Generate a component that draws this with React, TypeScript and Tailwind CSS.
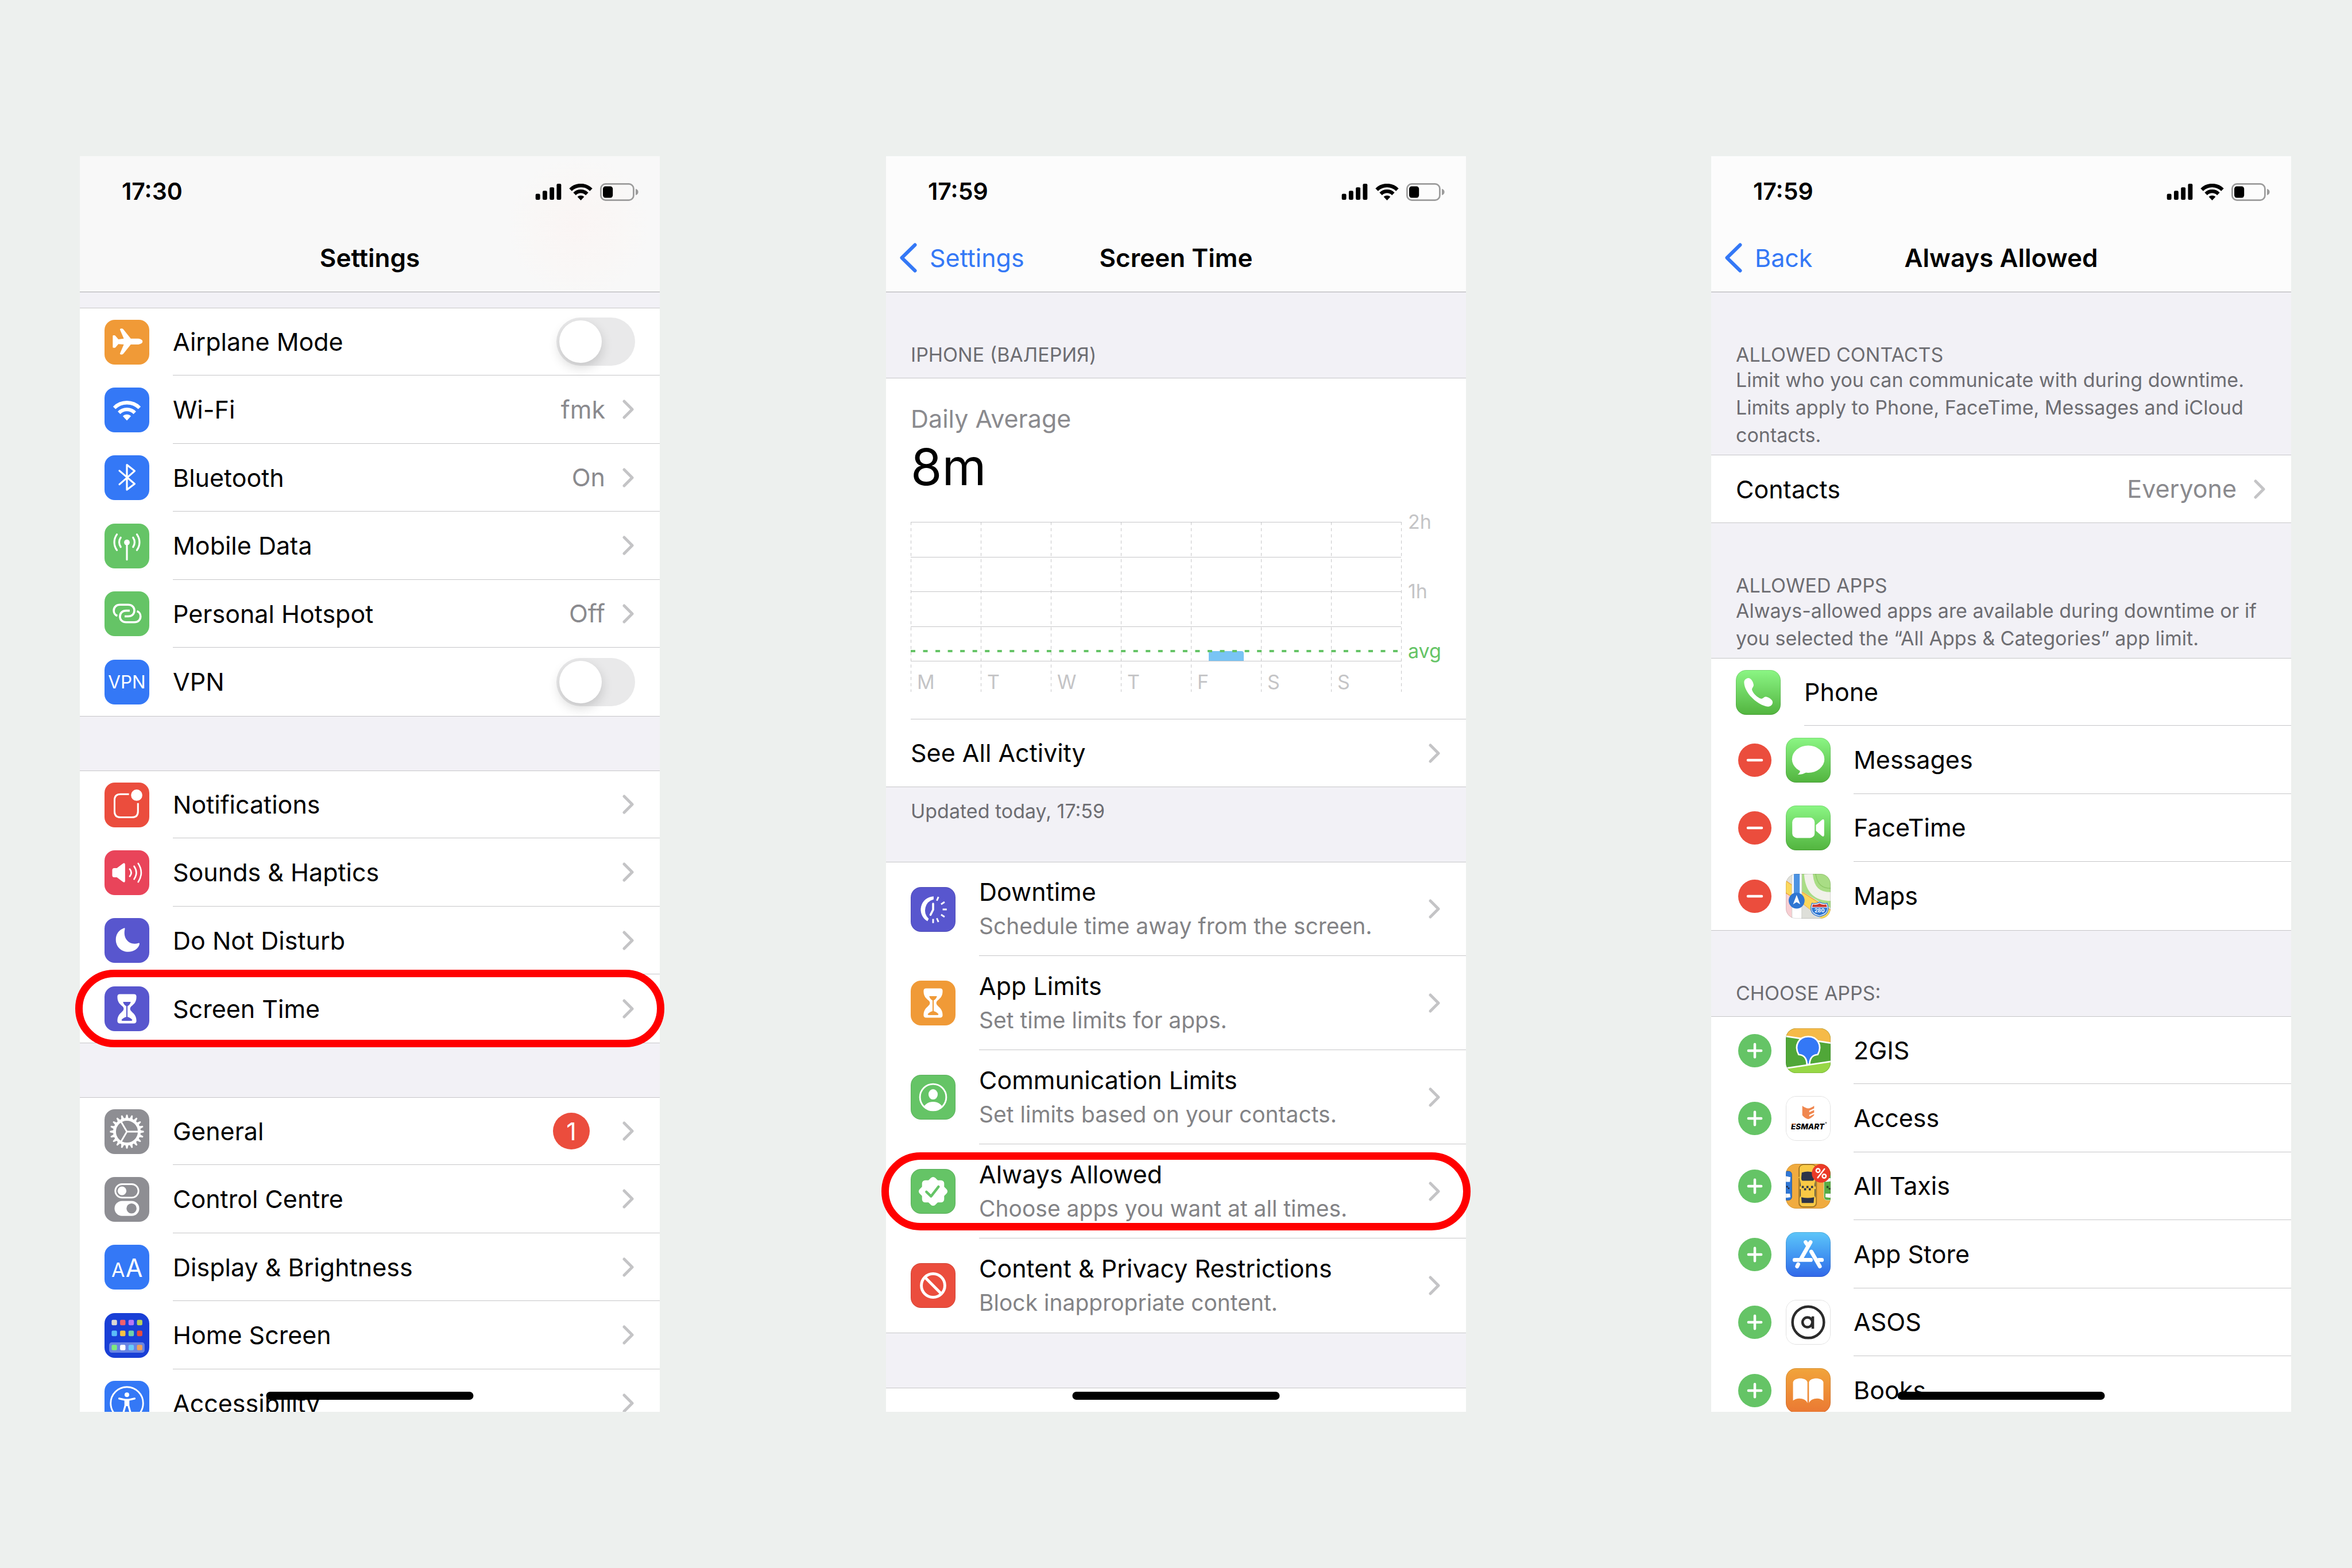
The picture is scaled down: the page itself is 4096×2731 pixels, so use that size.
import { useId, type ReactNode } from "react";

const FONT = "font-['Inter','Noto_Sans',sans-serif]";

/* ---------- status bar ---------- */

function SignalIcon() {
  return (
    <svg viewBox="0 0 51 32" className="h-[28px] w-[46px]" aria-hidden="true">
      <rect x="0" y="20" width="9" height="12" rx="2.5" />
      <rect x="14" y="14" width="9" height="18" rx="2.5" />
      <rect x="28" y="7" width="9" height="25" rx="2.5" />
      <rect x="42" y="0" width="9" height="32" rx="2.5" />
    </svg>
  );
}

function StatusWifiIcon() {
  return (
    <svg viewBox="0 0 45 32" className="h-[29px] w-[41px]" aria-hidden="true">
      <path
        d="M2.700 11.500A28 28 0 0 1 42.300 11.500M10.500 19.500A17 17 0 0 1 34.500 19.500"
        fill="none"
        stroke="#000"
        strokeWidth="7"
      />
      <path d="M22.500 32L16 25.200A9.500 9.500 0 0 1 29 25.200Z" />
    </svg>
  );
}

function BatteryIcon() {
  return (
    <svg viewBox="0 0 74 34" className="h-[31px] w-[67px]" aria-hidden="true">
      <rect x="1.500" y="1.500" width="63" height="31" rx="9" fill="none" stroke="#9b9b9b" strokeWidth="3" />
      <rect x="5.500" y="6" width="19" height="22" rx="5" />
      <path d="M68.500 11Q73.500 12.500 73.500 17T68.500 23Z" fill="#9b9b9b" />
    </svg>
  );
}

function StatusBar({ time }: { time: string }) {
  return (
    <div className="flex h-[118px] items-center justify-between pt-[6px] pr-[37px] pl-[73px]">
      <time className="text-[41px] font-semibold">{time}</time>
      <div className="flex items-center gap-[13px]">
        <SignalIcon />
        <StatusWifiIcon />
        <BatteryIcon />
      </div>
    </div>
  );
}

/* ---------- glyphs, all on an 87 unit tile ---------- */

function Tile({ bg, children, border }: { bg: string; children: ReactNode; border?: boolean }) {
  return (
    <svg
      viewBox="0 0 87 87"
      className={`h-[78px] w-[78px] shrink-0 rounded-[18px] ${bg} ${FONT}`}
      aria-hidden="true"
    >
      {children}
      {border ? (
        <rect x="0.500" y="0.500" width="86" height="86" rx="19.500" fill="none" stroke="#000" strokeOpacity="0.14" />
      ) : null}
    </svg>
  );
}

const ORANGE = "bg-[#f09a37]";
const BLUE = "bg-[#3478f6]";
const GREEN = "bg-[#65c466]";
const RED = "bg-[#eb4d3d]";
const INDIGO = "bg-[#5856ce]";
const GRAY = "bg-[#8e8e93]";

const line = {
  fill: "none",
  stroke: "#fff",
  strokeLinecap: "round",
  strokeLinejoin: "round",
} as const;

function AirplaneTile() {
  return (
    <Tile bg={ORANGE}>
      <path
        fill="#fff"
        d="M30 19Q30 17 32 17h2q2 0 3 2L51 36.500H66Q74 38 74 42T66 48H51L37 65.500q-1.500 2-3 2h-2q-2 0-2-2L37.500 48L27 47L21.500 53.500Q20.500 54.500 19 54.500H17.500Q16 54.500 16 53V31.500Q16 30 17.500 30H19Q20.500 30 21.500 31.500L27 38L37.500 36.500Z"
      />
    </Tile>
  );
}

function WifiTile() {
  return (
    <Tile bg={BLUE}>
      <path {...line} strokeLinecap="butt" strokeWidth="7" d="M19 39.500A34.500 34.500 0 0 1 68 39.500M28.200 49A21.500 21.500 0 0 1 58.800 49" />
      <path fill="#fff" d="M43.500 64L35.500 55.500A11.500 11.500 0 0 1 51.500 55.500Z" />
    </Tile>
  );
}

function BluetoothTile() {
  return (
    <Tile bg={BLUE}>
      <path {...line} strokeWidth="3.600" d="M29 30L58.500 55.500L43.500 67V18.500L58.500 30.500L29 56.500" />
    </Tile>
  );
}

function MobileDataTile() {
  return (
    <Tile bg={GREEN}>
      <circle cx="43.500" cy="36.500" r="5.500" fill="#fff" />
      <path
        {...line}
        strokeWidth="3.600"
        d="M43.500 38V70M24 21A26 26 0 0 0 24 51.500M63 21A26 26 0 0 1 63 51.500M31.500 27A16 16 0 0 0 31.500 45.500M55.500 27A16 16 0 0 1 55.500 45.500"
      />
    </Tile>
  );
}

function HotspotTile() {
  return (
    <Tile bg={GREEN}>
      <path
        {...line}
        strokeLinecap="butt"
        strokeWidth="4"
        d="M25 47.500C20 46 18 41 18 37.500C18 30.500 23 26 30 26H46C53 26 58 30.500 58 37C58 44 53 48.500 46 48.500H39"
      />
      <path
        {...line}
        strokeLinecap="butt"
        strokeWidth="4"
        d="M63 38.500C68 40 70 45 70 48.500C70 55.500 65 60 58 60H42C35 60 30 55.500 30 49C30 42 35 37.500 42 37.500H49"
      />
    </Tile>
  );
}

function VpnTile() {
  return (
    <Tile bg={BLUE}>
      <text x="43.500" y="56" textAnchor="middle" fontSize="35" fill="#fff">
        VPN
      </text>
    </Tile>
  );
}

function NotificationsTile() {
  return (
    <Tile bg={RED}>
      <path {...line} strokeLinecap="butt" strokeWidth="3.400" d="M47.500 22.500H31Q19.500 22.500 19.500 34V56Q19.500 67.500 31 67.500H53.500Q65 67.500 65 56V40" />
      <circle cx="62.500" cy="24.500" r="11" fill="#fff" />
    </Tile>
  );
}

function SoundsTile() {
  return (
    <Tile bg="bg-[#e9445a]">
      <path fill="#fff" d="M19 34.500H24L35.500 26Q40 23 40 28V59Q40 64 35.500 61L24 52.500H19Q15 52.500 15 48.500V38.500Q15 34.500 19 34.500Z" />
      <path {...line} strokeWidth="3" d="M49 36.500Q55 43.500 49 50.500M57.500 31Q66 43.500 57.500 56M65.500 25.500Q77 43.500 65.500 61.500" />
    </Tile>
  );
}

function MoonTile() {
  return (
    <Tile bg={INDIGO}>
      <path
        fill="#fff"
        d="M38 19.500C27 23 22 32 22 42C22 56 33 65.500 46 65.500C57 65.500 66 59.500 68 50.500C68.300 48.500 67 48.300 65.500 48.800C50 53.500 35 42 39.500 21.500C39.800 20 39.500 19 38 19.500Z"
      />
    </Tile>
  );
}

function HourglassTile({ bg, ink }: { bg: string; ink: string }) {
  return (
    <Tile bg={bg}>
      <path
        fill="#fff"
        d="M25 20Q25 15 30 15H57Q62 15 62 20C62 33 55 35 51 40Q48.500 43.500 51 47C55 52 62 55 62 67Q62 72 57 72H30Q25 72 25 67C25 55 32 52 36 47Q38.500 43.500 36 40C32 35 25 33 25 20Z"
      />
      <path fill={ink} d="M36 30H51Q50 35 44.600 38.500V59Q51 61 54 65Q54 67 52 67H35Q33 67 33 65Q36 61 42.400 59V38.500Q37 35 36 30Z" />
    </Tile>
  );
}

function GearTile() {
  const teeth = Array.from({ length: 20 }, (_, i) => i * 18);
  return (
    <Tile bg={GRAY}>
      <circle cx="43.500" cy="43.500" r="24" fill="none" stroke="#fff" strokeWidth="5.500" />
      {teeth.map((a) => (
        <path key={a} fill="#fff" d="M40.500 18L42.200 10.500H44.800L46.500 18Z" transform={`rotate(${a} 43.500 43.500)`} />
      ))}
      <path {...line} strokeWidth="3.200" d="M43.500 43.500H66M43.500 43.500L32 24M43.500 43.500L32 63" />
    </Tile>
  );
}

function ControlCentreTile() {
  return (
    <Tile bg={GRAY}>
      <rect x="21" y="14" width="45" height="26" rx="13" fill="none" stroke="#fff" strokeWidth="3.200" />
      <circle cx="34" cy="27" r="8.500" fill="#fff" />
      <rect x="19.500" y="46.500" width="48" height="29" rx="14.500" fill="#fff" />
      <circle cx="52.500" cy="61" r="9.800" fill="#8e8e93" />
    </Tile>
  );
}

function DisplayTile() {
  return (
    <Tile bg={BLUE}>
      <text x="13.500" y="62" fontSize="38" fill="#fff">
        A
      </text>
      <text x="41" y="62" fontSize="48" fill="#fff">
        A
      </text>
    </Tile>
  );
}

const homeCells = [
  { y: 13, colors: ["#d9d9d3", "#f2606c", "#b678f5", "#b9d25a"] },
  { y: 34, colors: ["#5bbcf8", "#f6c244", "#6fd0a8", "#ea4d3c"] },
  { y: 61.5, colors: ["#7eea7d", "#ffffff", "#6acbfa", "#f0a05a"] },
];

function HomeScreenTile() {
  return (
    <Tile bg="bg-[#193fd6]">
      <rect x="9" y="57" width="69" height="20" rx="5" fill="#6884e3" />
      {homeCells.map((row) =>
        row.colors.map((c, i) => (
          <rect key={c} x={13.8 + i * 16.4} y={row.y} width="10.500" height="10.800" rx="2.500" fill={c} />
        )),
      )}
    </Tile>
  );
}

function AccessibilityTile() {
  return (
    <Tile bg={BLUE}>
      <circle cx="43.500" cy="43.500" r="31.500" fill="none" stroke="#fff" strokeWidth="3.200" />
      <circle cx="43.500" cy="27" r="4.500" fill="#fff" />
      <path {...line} strokeWidth="3.600" d="M28.500 34.500L40 37H47L58.500 34.500M40.500 38V48L36 64M46.500 38V48L51 64" />
      <path fill="#fff" d="M39 36H48V49H39Z" />
    </Tile>
  );
}

function DowntimeTile() {
  return (
    <Tile bg={INDIGO} border>
      <path fill="#fff" d="M44.500 18A26 26 0 0 0 32.500 66.500L35 61.500A22 22 0 0 1 44.500 24Z" />
      <path {...line} strokeWidth="4" d="M43.500 32.500V44L38.500 54" />
      {[-67, -33, 0, 33, 67, 90].map((a) => (
        <path key={a} d="M62 43.500H70" stroke="#fff" strokeWidth="3.200" transform={`rotate(${a} 43.500 43.500)`} />
      ))}
    </Tile>
  );
}

function ContactTile() {
  const clip = useId();
  return (
    <Tile bg={GREEN} border>
      <clipPath id={clip}>
        <circle cx="43.500" cy="43.500" r="26" />
      </clipPath>
      <circle cx="43.500" cy="43.500" r="25.500" fill="none" stroke="#fff" strokeWidth="3.200" />
      <ellipse cx="43.500" cy="38" rx="9" ry="10" fill="#fff" />
      <ellipse cx="43.500" cy="69" rx="20" ry="16.500" fill="#fff" clipPath={`url(#${clip})`} />
    </Tile>
  );
}

function SealTile() {
  return (
    <Tile bg={GREEN} border>
      <rect x="22" y="22" width="43" height="43" rx="6" fill="#fff" />
      <rect x="22" y="22" width="43" height="43" rx="6" fill="#fff" transform="rotate(45 43.500 43.500)" />
      <path {...line} stroke="#65c466" strokeWidth="5" d="M30.500 44.500L39.500 53L54 34.500" />
    </Tile>
  );
}

function BlockTile() {
  return (
    <Tile bg={RED} border>
      <circle cx="43.500" cy="43.500" r="22.800" fill="none" stroke="#fff" strokeWidth="5.500" />
      <path {...line} strokeWidth="5.500" d="M28 28L59 59" />
    </Tile>
  );
}

const APP_GREEN = "bg-linear-to-b from-[#8bf684] to-[#52b43e]";

function PhoneTile() {
  return (
    <Tile bg={APP_GREEN} border>
      <path
        fill="#fff"
        d="M24 15.500C29 15 34 23 34.500 29C34.500 33.500 30.500 35 31.500 39C34 46 42 53.500 48.500 55.500C53 56.500 54.500 51.500 58.500 52C64 53 71.500 58 71.500 62.500C71.500 67 68 71 62.500 71C47 70.500 17 48 16 24C16 19 20 16 24 15.500Z"
      />
    </Tile>
  );
}

function MessagesTile() {
  return (
    <Tile bg={APP_GREEN} border>
      <ellipse cx="43.500" cy="41.500" rx="31.500" ry="26.500" fill="#fff" />
      <path fill="#fff" d="M27 59Q30 67 23 71.500Q34 71.500 41 66Z" />
    </Tile>
  );
}

function FaceTimeTile() {
  return (
    <Tile bg={APP_GREEN} border>
      <rect x="12.500" y="23.500" width="43.500" height="39.500" rx="9" fill="#fff" />
      <path fill="#fff" d="M58.500 38L70 28Q74.500 25 74.500 30V57Q74.500 62 70 59L58.500 49Z" />
    </Tile>
  );
}

function MapsTile() {
  return (
    <Tile bg="bg-[#e0e0da]" border>
      <path fill="#a9dd85" d="M31 0H87V66L31 34Z" />
      <path d="M44 0C46 32 62 44 87 44" fill="none" stroke="#f1f1ea" strokeWidth="17" />
      <path d="M58 0C61 22 72 28 87 28" fill="none" stroke="#8cc766" strokeWidth="1.500" />
      <path fill="#f8cfd3" d="M0 37L12 46V87H0Z" />
      <path fill="#fbd75b" stroke="#f0a93f" strokeWidth="1.500" d="M-2 12L31 35L90 72V90H70L31 56L-2 36Z" />
      <path fill="#dedfd9" d="M31 57L70 88H31Z" />
      <path fill="#fff" d="M12 -1H31V88H12Z" stroke="#cfcfc9" strokeWidth="1" />
      <path fill="#4d93e2" d="M15.500 0H27V45H15.500Z" />
      <circle cx="21" cy="52" r="15.500" fill="#2f76d2" />
      <path fill="#fff" d="M21 41L28 59L21 55L14 59Z" />
      <path fill="#fff" stroke="#2f76d2" strokeWidth="1.500" d="M51 57Q58 59 65.500 55Q73 59 80 57Q86 72 76 79Q70 82 65.500 83Q61 82 55 79Q45 72 51 57Z" />
      <path fill="#c8362e" d="M52.500 59.500Q60 61 65.500 57.500Q71 61 78.500 59.500L80 64.500H51Z" />
      <path fill="#2f76d2" d="M50.500 65.500H80.500Q81 73 75 77Q69 80 65.500 81Q62 80 56 77Q50 73 50.500 65.500Z" />
      <text x="65.500" y="75" textAnchor="middle" fontSize="10" fontWeight="700" fill="#fff">
        280
      </text>
    </Tile>
  );
}

function GisTile() {
  return (
    <Tile bg="bg-[#50a738]" border>
      <path fill="#f5ba48" stroke="#fff" strokeWidth="3" d="M-3 -3H90V29L-3 15Z" />
      <path fill="#97d746" stroke="#fff" strokeWidth="3" d="M-3 78L90 64V90H-3Z" />
      <path
        fill="#3478f6"
        stroke="#fff"
        strokeWidth="3"
        strokeLinejoin="round"
        d="M25 51C15 33 26 16 43.500 16S72 33 62 51C52 51.500 46.500 58 46 70H41C40.500 58 35 51.500 25 51Z"
      />
    </Tile>
  );
}

function EsmartTile() {
  return (
    <Tile bg="bg-white" border>
      <path fill="#f0874f" d="M32 19Q39 24 43.500 24T55 19V24L45.500 28.500V31.500L55 27V32L45.500 36.500V39.500L55 35V37Q51 42 43.500 45Q35 42 32 37Z" />
      <text x="42.500" y="65" textAnchor="middle" fontSize="15" fontWeight="800" fontStyle="italic" fill="#000">
        ESMART
      </text>
      <path d="M13 54.200H19" stroke="#f0874f" strokeWidth="2" />
      <circle cx="78" cy="52" r="1.800" fill="#888" />
    </Tile>
  );
}

function TaxisTile() {
  return (
    <Tile bg="bg-[#f0ab3f]" border>
      <rect x="-12" y="14.500" width="23.500" height="56" rx="6" fill="#2f77d6" stroke="#26589c" />
      <path fill="#fff" d="M0 24L9 26L8 35H0ZM0 58H8L9 65L0 66Z" />
      <path fill="#222b45" d="M1 43H4V46H1ZM4 46H7V49H4Z" />
      <rect x="74" y="14.500" width="24" height="56" rx="6" fill="#57ad45" stroke="#d9e9c8" />
      <path fill="#fff" d="M77 35L87 34V28H77ZM77 58H87V66L77 65Z" />
      <path fill="#2d4a2a" d="M79 43H83V47H79ZM83 47H87V50H83Z" />
      <rect x="24.500" y="2" width="36" height="83" rx="8" fill="#c4852b" />
      <rect x="26" y="1.500" width="33" height="82" rx="8" fill="#f9c945" stroke="#8a6a22" strokeWidth="1.200" />
      <path d="M22 28L27 26M62 28L58 26" stroke="#e9b43a" strokeWidth="2" />
      <path fill="#2d3449" d="M31 17Q42.500 13 54 17L55 27Q55 33 52 33H33Q30 33 30 27ZM30 65Q42.500 68 55 65L54 76H31ZM27.500 30L29 40V44H27.500ZM57.500 30L56 40V44H57.500ZM27.500 49H29V62L27.500 66ZM57.500 49H56V62L57.500 66Z" />
      <path fill="#2d3449" d="M31 43H35V47H31ZM40 43H44V47H40ZM49 43H53V47H49ZM35.500 47.500H39.500V51.500H35.500ZM44.500 47.500H48.500V51.500H44.500Z" />
      <circle cx="68.500" cy="18.500" r="18" fill="#eb3a28" />
      <g fill="none" stroke="#fff" strokeWidth="2.800" strokeLinecap="round">
        <circle cx="62.500" cy="13" r="3.600" />
        <circle cx="74.500" cy="24" r="3.600" />
        <path d="M75 10L62 27" />
      </g>
    </Tile>
  );
}

function AppStoreTile() {
  return (
    <Tile bg="bg-linear-to-b from-[#5ec6f9] to-[#3267e8]" border>
      <path {...line} strokeWidth="7.600" d="M38.500 19.500L41 23.500M49.500 38L66 66.500M64 54H70M17 54H48.500M24 62.500L22 66.500" />
      <path {...line} strokeWidth="7.600" d="M48 19.500L30 51" />
    </Tile>
  );
}

function AsosTile() {
  return (
    <Tile bg="bg-white" border>
      <g fill="none" stroke="#2b2b2b">
        <circle cx="43.500" cy="43.500" r="30.500" strokeWidth="5" />
        <circle cx="42" cy="43.500" r="9.500" strokeWidth="5" />
        <path d="M52.500 32V56" strokeWidth="5" />
      </g>
    </Tile>
  );
}

function BooksTile() {
  return (
    <Tile bg="bg-linear-to-b from-[#f1a43b] to-[#ea7833]" border>
      <path fill="#fff" d="M14 27C17 17.500 39 17.500 42 27V68C39 57.500 21 56 14 63Z" />
      <path fill="#fff" d="M73 27C70 17.500 48 17.500 45 27V68C48 57.500 66 56 73 63Z" />
    </Tile>
  );
}

/* ---------- list parts ---------- */

function Chevron() {
  return (
    <svg viewBox="0 0 22 34" className="h-[34px] w-[22px] shrink-0" aria-hidden="true">
      <path d="M3 3L17 17L3 31" fill="none" stroke="#c4c4c6" strokeWidth="5" strokeLinecap="round" strokeLinejoin="round" />
    </svg>
  );
}

function Highlight({ tall }: { tall?: boolean }) {
  return (
    <span
      className={`pointer-events-none absolute -inset-x-[8px] z-10 rounded-full border-[13px] border-[#ff0000] ${
        tall ? "inset-y-[14px]" : "-inset-y-[8px]"
      }`}
    />
  );
}

function List({ children }: { children: ReactNode }) {
  return <ul className="border-b border-[#c6c6c8] bg-white">{children}</ul>;
}

type RowProps = {
  label: string;
  icon?: ReactNode;
  value?: string;
  badge?: number;
  subtitle?: string;
  highlight?: boolean;
};

const rowBox = "group relative flex border-[#c6c6c8] first:border-t";
const rowHeight = "h-[118px] even:h-[119px]";
const rowBody =
  "flex h-full flex-1 items-center border-b border-[#c6c6c8] pr-[43px] group-last:border-b-0";

function LinkRow({ label, icon, value, badge, subtitle, highlight }: RowProps) {
  return (
    <li className={`${rowBox} ${subtitle ? "h-[164px]" : rowHeight}`}>
      <a href="#" className="flex flex-1 items-center gap-[41px] pl-[43px]">
        {icon}
        <span className={rowBody}>
          <span className="flex flex-1 flex-col leading-[60px]">
            <span>{label}</span>
            {subtitle ? <span className="text-[39px] text-[#838386]">{subtitle}</span> : null}
          </span>
          {value ? <span className="mr-[30px] text-[#8a8a8e]">{value}</span> : null}
          {badge ? (
            <span className="mr-[57px] flex size-[64px] items-center justify-center rounded-full bg-[#eb4d3d] text-white">
              {badge}
            </span>
          ) : null}
          <Chevron />
        </span>
      </a>
      {highlight ? <Highlight tall={!!subtitle} /> : null}
    </li>
  );
}

function ToggleRow({ label, icon }: RowProps) {
  const id = useId();
  return (
    <li className={`${rowBox} ${rowHeight} items-center gap-[41px] pl-[43px]`}>
      {icon}
      <div className={rowBody}>
        <label htmlFor={id} className="flex-1">
          {label}
        </label>
        <input
          id={id}
          type="checkbox"
          className="h-[84px] w-[137px] appearance-none rounded-full bg-[#e9e9ea] p-[5px] before:block before:size-[74px] before:rounded-full before:bg-white before:shadow-[0_8px_20px_rgba(0,0,0,0.16)] checked:bg-[#65c466] checked:before:ml-[53px]"
        />
      </div>
    </li>
  );
}

function AppRow({ label, icon, action }: RowProps & { action: "add" | "remove" }) {
  return (
    <li className={`${rowBox} ${rowHeight} items-center pl-[47px]`}>
      <button
        type="button"
        aria-label={`${action} ${label}`}
        className={`mr-[25px] size-[58px] shrink-0 rounded-full ${action === "add" ? GREEN : RED}`}
      >
        <svg viewBox="0 0 65 65" aria-hidden="true">
          <path {...line} strokeWidth="5" d={action === "add" ? "M20 32.500H45M32.500 20V45" : "M19 32.500H46"} />
        </svg>
      </button>
      {icon}
      <div className={`ml-[40px] ${rowBody}`}>{label}</div>
    </li>
  );
}

function SectionHeader({ title, note }: { title: string; note?: string }) {
  return (
    <div className={`pt-[89px] pr-[24px] pl-[43px] text-[34px] text-[#6d6d72] ${note ? "pb-[10px]" : "pb-[20px]"}`}>
      <h2 className="leading-[40px]">{title}</h2>
      {note ? <p className="leading-[48px]">{note}</p> : null}
    </div>
  );
}

function Screen({
  time,
  title,
  back,
  tinted,
  children,
}: {
  time: string;
  title: string;
  back?: string;
  tinted?: boolean;
  children: ReactNode;
}) {
  return (
    <section className="relative aspect-[1125/2436] min-h-0 min-w-0 flex-1 overflow-y-clip bg-[#f2f1f6]">
      <header
        className={`border-b border-[#a9a9ac] ${
          tinted
            ? "bg-[#f8f8f8] bg-[radial-gradient(circle_at_86%_52%,#faf5f4_0,#f9f7f6_9%,#f8f8f8_14%)]"
            : "bg-[#fcfcfc]"
        }`}
      >
        <StatusBar time={time} />
        <nav className="grid h-[118px] grid-cols-[1fr_auto_1fr] items-center">
          <div>
            {back ? (
              <a href="#" className="flex items-center gap-[22px] pl-[23px] text-[#3478f6]">
                <svg viewBox="0 0 31 52" className="h-[52px] w-[31px]" aria-hidden="true">
                  <path d="M27.500 3.500L4.500 26L27.500 48.500" fill="none" stroke="#3478f6" strokeWidth="6" strokeLinecap="round" strokeLinejoin="round" />
                </svg>
                {back}
              </a>
            ) : null}
          </div>
          <h1 className="text-[44px] font-semibold">{title}</h1>
        </nav>
      </header>
      {children}
      <div className="absolute bottom-[21px] left-1/2 z-10 h-[14px] w-[361px] -translate-x-1/2 rounded-full bg-black" />
    </section>
  );
}

/* ---------- weekly chart ---------- */

const days = ["M", "T", "W", "T", "F", "S", "S"];

function UsageChart() {
  return (
    <svg viewBox="0 0 967 340" className={`block w-full text-[34px] ${FONT}`} role="img" aria-label="Daily average screen time">
      <g stroke="#c6c6c8" strokeWidth="1">
        {[0, 1, 2, 3, 4].map((i) => (
          <path key={i} d={`M0 ${Math.round(20 + i * 60.6) + 0.5}H854`} />
        ))}
        {[0, 1, 2, 3, 4, 5, 6, 7].map((i) => (
          <path key={i} d={`M${i * 122 + 0.5} 20V316`} strokeDasharray="5.400 5.400" />
        ))}
      </g>
      <path d="M519 262V249Q519 245 523 245H576Q580 245 580 249V262Z" fill="#79c4f4" />
      <path d="M0 245H854" stroke="#65c466" strokeWidth="4" strokeDasharray="8 13.540" />
      <g fill="#c4c4c6">
        {days.map((d, i) => (
          <text key={i} x={i * 122 + 11} y="311">
            {d}
          </text>
        ))}
        <text x="866" y="32">
          2h
        </text>
        <text x="866" y="153">
          1h
        </text>
      </g>
      <text x="866" y="257" fill="#65c466">
        avg
      </text>
    </svg>
  );
}

/* ---------- screens ---------- */

function SettingsScreen() {
  return (
    <Screen time="17:30" title="Settings" tinted>
      <div className="flex flex-col gap-[94px] pt-[27px]">
        <List>
          <ToggleRow icon={<AirplaneTile />} label="Airplane Mode" />
          <LinkRow icon={<WifiTile />} label="Wi-Fi" value="fmk" />
          <LinkRow icon={<BluetoothTile />} label="Bluetooth" value="On" />
          <LinkRow icon={<MobileDataTile />} label="Mobile Data" />
          <LinkRow icon={<HotspotTile />} label="Personal Hotspot" value="Off" />
          <ToggleRow icon={<VpnTile />} label="VPN" />
        </List>
        <List>
          <LinkRow icon={<NotificationsTile />} label="Notifications" />
          <LinkRow icon={<SoundsTile />} label="Sounds & Haptics" />
          <LinkRow icon={<MoonTile />} label="Do Not Disturb" />
          <LinkRow icon={<HourglassTile bg={INDIGO} ink="#5856ce" />} label="Screen Time" highlight />
        </List>
        <List>
          <LinkRow icon={<GearTile />} label="General" badge={1} />
          <LinkRow icon={<ControlCentreTile />} label="Control Centre" />
          <LinkRow icon={<DisplayTile />} label="Display & Brightness" />
          <LinkRow icon={<HomeScreenTile />} label="Home Screen" />
          <LinkRow icon={<AccessibilityTile />} label="Accessibility" />
        </List>
      </div>
    </Screen>
  );
}

function ScreenTimeScreen() {
  return (
    <Screen time="17:59" title="Screen Time" back="Settings">
      <SectionHeader title="IPHONE (ВАЛЕРИЯ)" />
      <div className="border-y border-[#c6c6c8] bg-white pl-[43px]">
        <p className="pt-[40px] leading-[60px] text-[#8a8a8e]">Daily Average</p>
        <p className="text-[88px] leading-[108px]">8m</p>
        <div className="pt-[22px] pb-[23px]">
          <UsageChart />
        </div>
        <a href="#" className="flex h-[118px] items-center justify-between border-t border-[#c6c6c8] pr-[43px]">
          See All Activity
          <Chevron />
        </a>
      </div>
      <p className="pt-[18px] pb-[64px] pl-[43px] text-[34px] leading-[48px] text-[#6d6d72]">Updated today, 17:59</p>
      <div className="flex flex-col gap-[95px]">
        <List>
          <LinkRow icon={<DowntimeTile />} label="Downtime" subtitle="Schedule time away from the screen." />
          <LinkRow icon={<HourglassTile bg={ORANGE} ink="#f09a37" />} label="App Limits" subtitle="Set time limits for apps." />
          <LinkRow icon={<ContactTile />} label="Communication Limits" subtitle="Set limits based on your contacts." />
          <LinkRow icon={<SealTile />} label="Always Allowed" subtitle="Choose apps you want at all times." highlight />
          <LinkRow icon={<BlockTile />} label="Content & Privacy Restrictions" subtitle="Block inappropriate content." />
        </List>
        <List>
          <li className={`${rowBox} ${rowHeight} items-center pl-[43px]`}>
            <a href="#" className="text-[#3478f6]">
              Use Screen Time Passcode
            </a>
          </li>
        </List>
      </div>
    </Screen>
  );
}

function AlwaysAllowedScreen() {
  return (
    <Screen time="17:59" title="Always Allowed" back="Back">
      <SectionHeader
        title="ALLOWED CONTACTS"
        note="Limit who you can communicate with during downtime. Limits apply to Phone, FaceTime, Messages and iCloud contacts."
      />
      <List>
        <LinkRow label="Contacts" value="Everyone" />
      </List>
      <SectionHeader
        title="ALLOWED APPS"
        note="Always-allowed apps are available during downtime or if you selected the “All Apps & Categories” app limit."
      />
      <List>
        <li className={`${rowBox} ${rowHeight} items-center gap-[41px] pl-[43px]`}>
          <PhoneTile />
          <div className={rowBody}>Phone</div>
        </li>
        <AppRow action="remove" icon={<MessagesTile />} label="Messages" />
        <AppRow action="remove" icon={<FaceTimeTile />} label="FaceTime" />
        <AppRow action="remove" icon={<MapsTile />} label="Maps" />
      </List>
      <SectionHeader title="CHOOSE APPS:" />
      <List>
        <AppRow action="add" icon={<GisTile />} label="2GIS" />
        <AppRow action="add" icon={<EsmartTile />} label="Access" />
        <AppRow action="add" icon={<TaxisTile />} label="All Taxis" />
        <AppRow action="add" icon={<AppStoreTile />} label="App Store" />
        <AppRow action="add" icon={<AsosTile />} label="ASOS" />
        <AppRow action="add" icon={<BooksTile />} label="Books" />
      </List>
    </Screen>
  );
}

export default function App() {
  return (
    <main className={`flex min-h-screen items-start bg-[#edf0ee] pt-[272px] pr-[106px] pl-[139px] text-[43px] text-black ${FONT}`}>
      <SettingsScreen />
      <div className="w-[394px] shrink-0" />
      <ScreenTimeScreen />
      <div className="w-[427px] shrink-0" />
      <AlwaysAllowedScreen />
    </main>
  );
}
